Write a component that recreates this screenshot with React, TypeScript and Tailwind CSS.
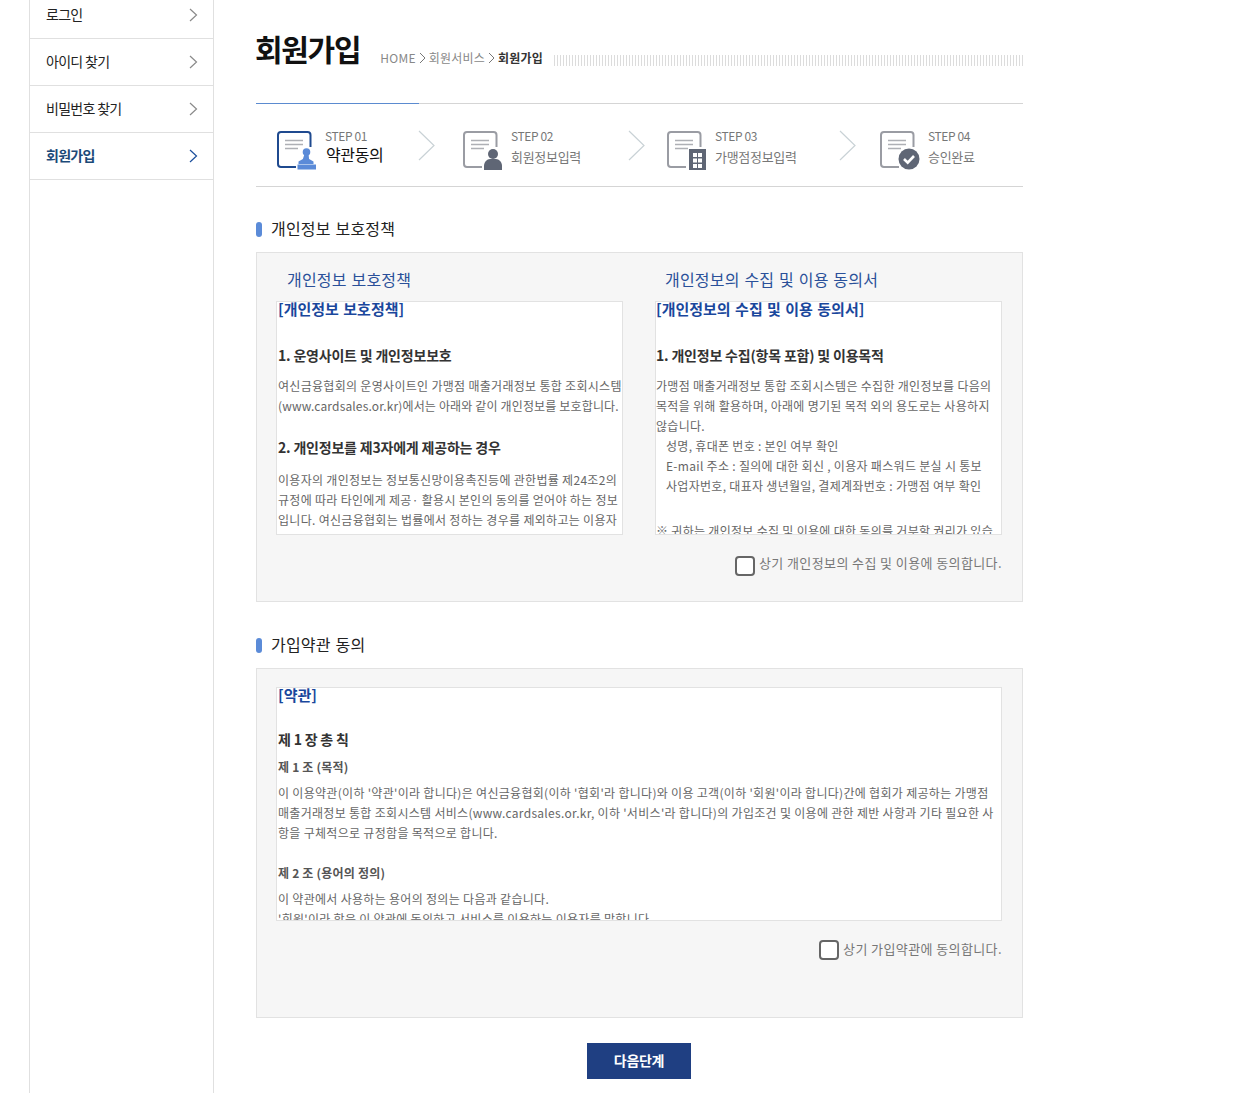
import React from "react";

const sideMenu = [
  { label: "아이디 찾기" },
  { label: "비밀번호 찾기" },
  { label: "회원가입", active: true },
];

const Chevron = ({ active }: { active?: boolean }) => (
  <svg width="9" height="14" viewBox="0 0 9 14" fill="none">
    <path d="M1 1l6.5 6L1 13" stroke={active ? "#1b4f9c" : "#8a8a8a"} strokeWidth="1.2" />
  </svg>
);

const BigChevron = () => (
  <svg width="17" height="31" viewBox="0 0 17 31" fill="none" className="shrink-0">
    <path d="M1 1l15 14.5L1 30" stroke="#c9d2d6" strokeWidth="1.2" />
  </svg>
);

const CrumbArrow = () => (
  <svg width="7" height="12" viewBox="0 0 7 12" fill="none" className="mx-[3px] shrink-0">
    <path d="M1 1l5 5-5 5" stroke="#777" strokeWidth="1" />
  </svg>
);

// 문서 아이콘 공통
const Doc = ({ color, line }: { color: string; line: string }) => (
  <>
    <path d="M34.5 17V5a3 3 0 0 0-3-3H5a3 3 0 0 0-3 3v29a3 3 0 0 0 3 3h15" stroke={color} strokeWidth="2" fill="none" />
    <path d="M9 10.5h18M9 14.5h18M9 18.5h13" stroke={line} strokeWidth="1.6" />
  </>
);

const StepIcon = ({ step }: { step: number }) => (
  <svg width="42" height="41" viewBox="0 0 42 41" className="shrink-0">
    {step === 1 && (
      <>
        <Doc color="#1f4a8f" line="#aeb0b5" />
        <circle cx="30.5" cy="22" r="3.8" fill="#5b8bd8" />
        <path d="M28.5 24h4l.6 5 4.4 2.5v2.5h-15v-2.5l4.4-2.5z" fill="#5b8bd8" />
        <rect x="21.5" y="34.5" width="18.5" height="5" fill="#5b8bd8" />
      </>
    )}
    {step === 2 && (
      <>
        <Doc color="#9a9ca3" line="#aeb0b5" />
        <circle cx="31" cy="24" r="5" fill="#5f6675" />
        <path d="M22 40v-4c0-4 3-7 6-7h6c3 0 6 3 6 7v4z" fill="#5f6675" />
      </>
    )}
    {step === 3 && (
      <>
        <Doc color="#9a9ca3" line="#aeb0b5" />
        <rect x="23" y="19" width="17" height="21" fill="#5f6675" />
        <path d="M27 23h4v4h-4zM32 23h4v4h-4zM27 28.5h4v4h-4zM32 28.5h4v4h-4zM27 34h4v4h-4zM32 34h4v4h-4z" fill="#fff" />
      </>
    )}
    {step === 4 && (
      <>
        <Doc color="#9a9ca3" line="#aeb0b5" />
        <circle cx="30" cy="29" r="10.5" fill="#5f6675" />
        <path d="M25 29l3.7 3.7 6.3-6.7" stroke="#fff" strokeWidth="2.6" fill="none" />
      </>
    )}
  </svg>
);

const Step = ({ step, no, label, active, className }: { step: number; no: string; label: string; active?: boolean; className: string }) => (
  <div className={`flex shrink-0 ${className}`}>
    <StepIcon step={step} />
    <div className="ml-[7px] flex flex-col">
      <span className="text-[12px] leading-[16px] tracking-[-0.4px] text-[#777] mt-[-2px]">{no}</span>
      {active ? (
        <span className="ml-px mt-[-1px] text-[16px] leading-[22px] tracking-[-0.4px] text-[#111]">{label}</span>
      ) : (
        <span className="mt-[3px] text-[13px] leading-[20px] tracking-[-0.3px] text-[#777]">{label}</span>
      )}
    </div>
  </div>
);

const SectionTitle = ({ children, className }: { children: React.ReactNode; className: string }) => (
  <div className={`flex items-center h-[20px] ${className}`}>
    <span className="w-[6px] h-[15px] rounded-full bg-[#5b8bd8]" />
    <h2 className="ml-[9px] mb-[2px] text-[16px] leading-[20px] font-normal text-[#222] tracking-[0.2px] [word-spacing:1px]">{children}</h2>
  </div>
);

const Agree = ({ label, className, textClass }: { label: string; className: string; textClass: string }) => (
  <label className={`flex items-center justify-end pr-[20px] ${className}`}>
    <span className="w-[20px] h-[20px] rounded-[4px] border-2 border-[#666] bg-white" />
    <span className={`ml-[4px] text-[13px] leading-[18px] text-[#777] tracking-[0.4px] ${textClass}`}>{label}</span>
  </label>
);

const BoxTitle = ({ children }: { children: React.ReactNode }) => (
  <p className="text-[15px] leading-[14px] font-bold text-[#1a479c] whitespace-nowrap [word-spacing:1px]">{children}</p>
);

const BoxHead = ({ children, className }: { children: React.ReactNode; className: string }) => (
  <p className={`text-[14px] leading-[20px] font-bold text-[#333] whitespace-nowrap tracking-[-0.2px] ${className}`}>{children}</p>
);

const SubHead = ({ children, className }: { children: React.ReactNode; className: string }) => (
  <p className={`text-[12px] leading-[20px] font-bold text-[#555] tracking-[0.2px] ${className}`}>{children}</p>
);

const Line = ({ children, className = "tracking-[0.3px]" }: { children: React.ReactNode; className?: string }) => (
  <p className={`text-[12px] leading-[20px] text-[#666] whitespace-nowrap ${className}`}>{children}</p>
);

export default function App() {
  return (
    <div className="relative flex min-h-[1093px] bg-white pl-[29px] font-['Noto_Sans_CJK_KR','Noto_Sans',sans-serif]">
      <aside className="w-[185px] shrink-0 border-x border-[#e0e0e0]">
        <div className="flex items-center justify-between h-[39px] pb-[8px] pl-[16px] pr-[15px] border-b border-[#e0e0e0] text-[14px] text-[#222] tracking-[-0.7px]">
          <span className="mb-[2px]">로그인</span>
          <Chevron />
        </div>
        {sideMenu.map((m) => (
          <div
            key={m.label}
            className={`flex items-center justify-between h-[47px] pl-[16px] pr-[15px] border-b border-[#e0e0e0] text-[14px] tracking-[-0.7px] ${m.active ? "font-bold text-[#1c4a78]" : "text-[#222]"}`}
          >
            <span className="mb-[2px]">{m.label}</span>
            <Chevron active={m.active} />
          </div>
        ))}
      </aside>

      <main className="ml-[42px] w-[767px] shrink-0">
        <div className="flex items-start h-[103px] pt-[26px]">
          <h1 className="-ml-px text-[30px] leading-[44px] font-bold tracking-[-1.3px] text-[#111]">회원가입</h1>
          <div className="ml-[20px] mt-[24px] flex items-center text-[12px] leading-[16px] text-[#888] whitespace-nowrap">
            <span className="tracking-[0.3px]">HOME</span>
            <CrumbArrow />
            <span className="tracking-[0.2px]">회원서비스</span>
            <CrumbArrow />
            <b className="tracking-[0.2px] text-[#333]">회원가입</b>
          </div>
          <div className="ml-auto mt-[29px] w-[469px] shrink-0 h-[11px] bg-[repeating-linear-gradient(90deg,#dcdcdc_0,#dcdcdc_1px,transparent_1px,transparent_3px)]" />
        </div>
        <div className="h-px bg-[#d5d5d5]">
          <div className="w-[163px] h-px bg-[#5b8bd0]" />
        </div>

        <div className="flex items-start h-[83px] pt-[26px] pl-[20px] border-b border-[#d5d5d5]">
          <Step step={1} no="STEP 01" label="약관동의" active className="w-[142px]" />
          <BigChevron />
          <Step step={2} no="STEP 02" label="회원정보입력" className="ml-[27px] w-[166px]" />
          <BigChevron />
          <Step step={3} no="STEP 03" label="가맹점정보입력" className="ml-[21px] w-[173px]" />
          <BigChevron />
          <Step step={4} no="STEP 04" label="승인완료" className="ml-[23px]" />
        </div>

        <SectionTitle className="mt-[32px]">개인정보 보호정책</SectionTitle>
        <section className="mt-[13px] h-[350px] border border-[#e2e2e2] bg-[#f6f6f6] pt-[17px]">
          <div className="flex pl-[19px] gap-[32px]">
            <div className="w-[347px]">
              <h3 className="-mt-px pl-[11px] text-[16px] leading-[20px] font-normal text-[#2a5099] tracking-[0.2px] [word-spacing:1px]">개인정보 보호정책</h3>
              <div className="mt-[12px] h-[234px] overflow-hidden border border-[#e2e2e2] bg-white pl-[1px]">
                <BoxTitle>[개인정보 보호정책]</BoxTitle>
                <BoxHead className="mt-[29px]">1. 운영사이트 및 개인정보보호</BoxHead>
                <Line className="mt-[11px] tracking-[0.3px]">여신금융협회의 운영사이트인 가맹점 매출거래정보 통합 조회시스템</Line>
                <Line className="tracking-[0.15px]">(www.cardsales.or.kr)에서는 아래와 같이 개인정보를 보호합니다.</Line>
                <BoxHead className="mt-[21px]">2. 개인정보를 제3자에게 제공하는 경우</BoxHead>
                <Line className="mt-[13px] tracking-[0.3px]">이용자의 개인정보는 정보통신망이용촉진등에 관한법률 제24조2의</Line>
                <Line>규정에 따라 타인에게 제공· 활용시 본인의 동의를 얻어야 하는 정보</Line>
                <Line>입니다. 여신금융협회는 법률에서 정하는 경우를 제외하고는 이용자</Line>
              </div>
            </div>
            <div className="w-[347px]">
              <h3 className="-mt-px pl-[10px] text-[16px] leading-[20px] font-normal text-[#2a5099] tracking-[0.2px] [word-spacing:1px]">개인정보의 수집 및 이용 동의서</h3>
              <div className="mt-[12px] h-[234px] overflow-hidden border border-[#e2e2e2] bg-white">
                <BoxTitle>[개인정보의 수집 및 이용 동의서]</BoxTitle>
                <BoxHead className="mt-[29px]">1. 개인정보 수집(항목 포함) 및 이용목적</BoxHead>
                <Line className="mt-[11px] tracking-[0.3px]">가맹점 매출거래정보 통합 조회시스템은 수집한 개인정보를 다음의</Line>
                <Line>목적을 위해 활용하며, 아래에 명기된 목적 외의 용도로는 사용하지</Line>
                <Line>않습니다.</Line>
                <Line className="pl-[10px] tracking-[0.3px]">성명, 휴대폰 번호 : 본인 여부 확인</Line>
                <Line className="pl-[10px] tracking-[0.3px]">E-mail 주소 : 질의에 대한 회신 , 이용자 패스워드 분실 시 통보</Line>
                <Line className="pl-[10px] tracking-[0.3px]">사업자번호, 대표자 생년월일, 결제계좌번호 : 가맹점 여부 확인</Line>
                <Line className="mt-[25px] tracking-[0.3px]">※ 귀하는 개인정보 수집 및 이용에 대한 동의를 거부할 권리가 있습</Line>
              </div>
            </div>
          </div>
          <Agree label="상기 개인정보의 수집 및 이용에 동의합니다." className="mt-[21px]" textClass="mt-[-7px]" />
        </section>

        <SectionTitle className="mt-[33px]">가입약관 동의</SectionTitle>
        <section className="mt-[13px] h-[350px] border border-[#e2e2e2] bg-[#f6f6f6] pt-[18px]">
          <div className="ml-[19px] w-[726px] h-[234px] overflow-hidden border border-[#e2e2e2] bg-white pl-[1px]">
            <BoxTitle>[약관]</BoxTitle>
            <BoxHead className="mt-[27px]">제 1 장 총 칙</BoxHead>
            <SubHead className="mt-[8px]">제 1 조 (목적)</SubHead>
            <Line className="mt-[6px] tracking-[0.3px]">이 이용약관(이하 '약관'이라 합니다)은 여신금융협회(이하 '협회'라 합니다)와 이용 고객(이하 '회원'이라 합니다)간에 협회가 제공하는 가맹점</Line>
            <Line>매출거래정보 통합 조회시스템 서비스(www.cardsales.or.kr, 이하 '서비스'라 합니다)의 가입조건 및 이용에 관한 제반 사항과 기타 필요한 사</Line>
            <Line>항을 구체적으로 규정함을 목적으로 합니다.</Line>
            <SubHead className="mt-[20px]">제 2 조 (용어의 정의)</SubHead>
            <Line className="mt-[6px] tracking-[0.3px]">이 약관에서 사용하는 용어의 정의는 다음과 같습니다.</Line>
            <Line>'회원'이라 함은 이 약관에 동의하고 서비스를 이용하는 이용자를 말합니다.</Line>
          </div>
          <Agree label="상기 가입약관에 동의합니다." className="mt-[19px]" textClass="mt-[-2px]" />
        </section>

        <div className="mt-[25px] flex justify-center pr-px">
          <button className="w-[104px] h-[36px] pb-[2px] bg-[#1f3f82] text-white text-[14px] font-bold tracking-[-0.3px]">다음단계</button>
        </div>
      </main>
    </div>
  );
}
